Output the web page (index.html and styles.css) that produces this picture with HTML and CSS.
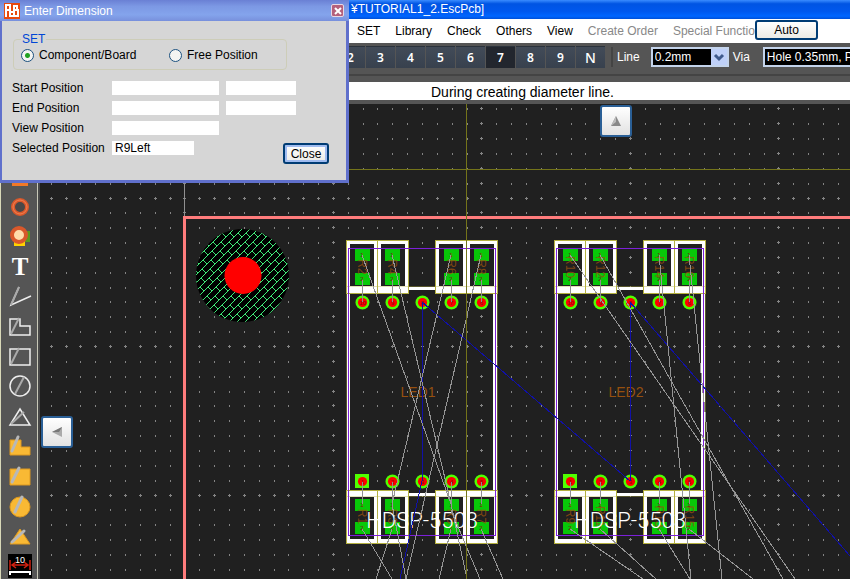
FILE: index.html
```html
<!DOCTYPE html>
<html lang="en">

<head>
    <meta charset="UTF-8">
    <meta name="viewport" content="width=device-width, initial-scale=1.0">
    <title>TUTORIAL1_2.EscPcb</title>
    <link rel="stylesheet" href="styles.css">
</head>

<body>
    <header class="titlebar">¥TUTORIAL1_2.EscPcb]</header>

    <div class="menubar">
        <nav class="menu">
            <a href="#">SET</a>
            <a href="#">Library</a>
            <a href="#">Check</a>
            <a href="#">Others</a>
            <a href="#">View</a>
            <a href="#" class="disabled">Create Order</a>
            <a href="#" class="disabled">Special Function</a>
        </nav>
        <button class="xp-button auto">Auto</button>
    </div>

    <div class="toolbar">
        <div class="layers">
            <button>2</button>
            <button>3</button>
            <button>4</button>
            <button>5</button>
            <button>6</button>
            <button class="active">7</button>
            <button>8</button>
            <button>9</button>
            <button class="letter">N</button>
        </div>
        <span class="divider"></span>
        <label for="line">Line</label>
        <span class="combo">
            <select id="line">
                <option>0.2mm</option>
            </select>
            <svg class="arrow" viewBox="0 0 16 16"><path d="M4 6l4 4 4-4" fill="none" stroke="#3f5a8c" stroke-width="3"/></svg>
        </span>
        <label for="via">Via</label>
        <span class="combo wide">
            <select id="via">
                <option>Hole 0.35mm, Pad 0.6mm</option>
            </select>
        </span>
    </div>

    <div class="status">During creating diameter line.</div>

    <main class="work">
        <aside class="tools">
            <button aria-label="Pad"><svg viewBox="0 0 30 30"><path d="M7 6h16v18H7z" fill="#f07828"/></svg></button>
            <button aria-label="Via"><svg viewBox="0 0 30 30"><circle cx="15" cy="15" r="7" fill="#484848" stroke="#d9582b" stroke-width="4"/><circle cx="15" cy="15" r="7" fill="none" stroke="#f08050"/></svg></button>
            <button aria-label="Component"><svg viewBox="0 0 30 30"><path d="M16 9h9v11h-9z" fill="#5a9a20"/><path d="M9 17h11v7H9z" fill="#ffd200"/><circle cx="14" cy="13" r="7" fill="#ffdcaa" stroke="#d9582b" stroke-width="4"/></svg></button>
            <button class="text-tool" aria-label="Text">T</button>
            <button aria-label="Line"><svg viewBox="0 0 30 30"><path d="M26 14L6 23L14 5" class="outline"/><path d="M14 5L6 23" class="pen"/></svg></button>
            <button aria-label="Outline polygon"><svg viewBox="0 0 30 30"><path d="M5 7h10v7h10v9H5z" class="outline"/><path d="M14 6L6 22" class="pen"/></svg></button>
            <button aria-label="Outline box"><svg viewBox="0 0 30 30"><path d="M5 7h20v16H5z" class="outline"/><path d="M14 6L6 22" class="pen"/></svg></button>
            <button aria-label="Outline circle"><svg viewBox="0 0 30 30"><circle cx="15" cy="14" r="10" class="outline"/><path d="M19 5L10 22" class="pen"/></svg></button>
            <button aria-label="Outline triangle"><svg viewBox="0 0 30 30"><path d="M15 7l10 16H5z" class="outline"/><path d="M19 10L6 22" class="pen"/></svg></button>
            <button aria-label="Filled polygon"><svg viewBox="0 0 30 30"><path d="M5 8h11v7h9v8H5z" class="solid"/><path d="M13 5L7 19" class="brush"/></svg></button>
            <button aria-label="Filled box"><svg viewBox="0 0 30 30"><path d="M5 7h20v16H5z" class="solid"/><path d="M14 6L7 20" class="brush"/></svg></button>
            <button aria-label="Filled circle"><svg viewBox="0 0 30 30"><circle cx="15" cy="15" r="10" class="solid"/><path d="M17 5L10 20" class="brush"/></svg></button>
            <button aria-label="Filled triangle"><svg viewBox="0 0 30 30"><path d="M15 7l10 15H5z" class="solid"/><path d="M19 9L7 20" class="brush"/></svg></button>
            <button aria-label="Dimension"><svg viewBox="0 0 30 30"><path d="M3 2h24v24H3z" fill="#000"/><text x="15" y="11" class="dim">10</text><path d="M5 8v10M25 8v10M7 13h16M11 10l-4 3 4 3M19 10l4 3-4 3" stroke="#d02010" fill="none" stroke-width="1.5"/><path d="M5 23v-3h20v3" stroke="#fff" fill="none" stroke-width="2"/></svg></button>
        </aside>

        <div class="canvas">
            <svg class="board" width="100%" height="100%">
                <defs>
                    <clipPath id="mark"><circle cx="242.5" cy="275.5" r="46.5"/></clipPath>
                </defs>
                <g id="board" transform="translate(-40 -104)"></g>
            </svg>
            <button class="scroll up" aria-label="Scroll up"><svg viewBox="0 0 12 12"><path d="M6 1l5 10H1z" fill="#888"/><path d="M6 1v6l-5 4z" fill="#bbb"/></svg></button>
            <button class="scroll left" aria-label="Scroll left"><svg viewBox="0 0 12 12"><path d="M1 6l10-5v10z" fill="#aaa"/><path d="M1 6l10-5-3 5z" fill="#777"/></svg></button>
        </div>
    </main>

    <form class="dialog">
        <div class="dialog-title">
            <svg class="logo" viewBox="0 0 16 16"><path d="M0 0h16v16H0z" fill="#e8480c"/><path d="M2 14V2h4v5H2M9 9H6v4h3M10 3h3v4h-3zM10 7h4v6h-4z" fill="none" stroke="#fff" stroke-width="2"/></svg>
            <span>Enter Dimension</span>
            <button type="button" class="close-x" aria-label="Close window"><svg viewBox="0 0 10 10"><path d="M2 2l6 6M8 2L2 8" stroke="#fff" stroke-width="2"/></svg></button>
        </div>
        <fieldset>
            <legend>SET</legend>
            <label class="first"><input type="radio" name="set" checked>Component/Board</label>
            <label><input type="radio" name="set">Free Position</label>
        </fieldset>
        <div class="fields">
            <label for="start">Start Position</label>
            <input type="text" id="start">
            <input type="text" aria-label="Start Position 2">
            <label for="end">End Position</label>
            <input type="text" id="end">
            <input type="text" aria-label="End Position 2">
            <label for="view">View Position</label>
            <input type="text" id="view">
            <label for="selected">Selected Position</label>
            <input type="text" id="selected" value="R9Left">
        </div>
        <button type="button" class="xp-button close">Close</button>
    </form>

    <script src="board.js"></script>
</body>

</html>
```
FILE: styles.css
```css
* {
    box-sizing: border-box;
}

body {
    margin: 0;
    height: 100vh;
    display: flex;
    flex-direction: column;
    overflow: hidden;
    background: #555;
    color: #000;
    font: 12px/16px "Liberation Sans", Arial, sans-serif;
}

button,
input,
select {
    font: inherit;
    color: inherit;
    margin: 0;
    padding: 0;
}

.titlebar {
    flex: none;
    height: 19px;
    padding-left: 351px;
    line-height: 18px;
    color: #fff;
    white-space: nowrap;
    background: linear-gradient(#3a8cff, #0054e3 20%, #0058ee 60%, #0066ff 85%, #0050d8);
}

.menubar {
    flex: none;
    display: flex;
    height: 24px;
    background: #fff;
}

.menu {
    flex: none;
    display: flex;
    align-items: center;
    gap: 15px;
    width: 755px;
    padding-left: 357px;
    overflow: hidden;
    white-space: nowrap;
}

.menu a {
    flex: none;
    color: #000;
    text-decoration: none;
}

.menu a.disabled {
    color: #888;
}

.xp-button {
    border: 2px solid #003c74;
    border-radius: 3px;
    background: linear-gradient(#fff, #ecebe5);
    line-height: 14px;
}

.auto {
    width: 63px;
    height: 20px;
    margin-top: 1px;
}

.toolbar {
    flex: none;
    display: flex;
    align-items: center;
    height: 33px;
    padding: 0 0 3px 336px;
    border-bottom: 2px solid #444;
    color: #fff;
    overflow: hidden;
}

.toolbar label {
    flex: none;
}

.layers {
    flex: none;
    display: flex;
    gap: 1px;
}

.layers button {
    width: 29px;
    height: 22px;
    border: 0;
    border-top: 1px solid #2c333c;
    background: linear-gradient(#424b58, #38414e);
    font: 600 12px/20px "Noto Sans", sans-serif;
    color: #fff;
}

.layers .active {
    background: #22262e;
}

.layers .letter {
    font-size: 14px;
    font-weight: 500;
}

.divider {
    flex: none;
    width: 2px;
    height: 20px;
    margin: 0 4px 0 6px;
    background: #444;
}

.combo {
    flex: none;
    position: relative;
    display: flex;
    width: 78px;
    height: 20px;
    margin: 0 4px 0 11px;
}

.combo.wide {
    width: 160px;
    margin-left: 13px;
}

.combo select {
    width: 100%;
    padding-left: 2px;
    appearance: none;
    border: 2px solid #c4d4ec;
    border-radius: 0;
    background: #000;
    color: #fff;
}

.arrow {
    position: absolute;
    top: 2px;
    right: 2px;
    width: 16px;
    height: 16px;
    background: #bfd0f8;
    pointer-events: none;
}

.status {
    flex: none;
    height: 18px;
    margin: 6px 0 4px;
    padding-left: 431px;
    background: #fff;
    font-size: 14px;
    line-height: 20px;
    white-space: nowrap;
}

.work {
    flex: 1;
    min-height: 0;
    display: flex;
}

.tools {
    flex: none;
    display: flex;
    flex-direction: column;
    width: 40px;
    padding: 58px 0 0 4px;
    overflow: hidden;
    border-left: 1px solid #d8d8b8;
    background: linear-gradient(90deg, #555 32px, #c8c8b8 32px, #c8c8b8 33px, #484848 33px) content-box, linear-gradient(#555, #555);
}

.tools button {
    flex: none;
    width: 30px;
    height: 30px;
    border: 0;
    background: none;
}

.tools svg {
    display: block;
    width: 30px;
    height: 30px;
}

.tools .text-tool {
    color: #fff;
    font: bold 25px/30px "Liberation Serif", serif;
}

.outline {
    fill: none;
    stroke: #eee;
    stroke-width: 1.5;
}

.pen {
    fill: none;
    stroke: #aaa;
    stroke-width: 2;
}

.solid {
    fill: #f9b934;
    stroke: #dc9820;
}

.brush {
    stroke: #b8b8b8;
    stroke-width: 3;
    stroke-linecap: round;
}

.dim {
    fill: #fff;
    font: 9px "Liberation Sans", sans-serif;
    text-anchor: middle;
}

.canvas {
    position: relative;
    flex: 1;
    min-width: 0;
    overflow: hidden;
    background: #202020;
}

.board {
    display: block;
}

.board text {
    fill: #96500f;
    font: 14px "Liberation Sans", sans-serif;
    text-anchor: middle;
}

.board .ref {
    font-size: 12px;
}

.board .part {
    fill: #fff;
    font: 300 22px Roboto, "Liberation Sans", sans-serif;
}

.board .pin {
    fill: #801010;
    font-size: 6px;
}

.scroll {
    position: absolute;
    display: flex;
    align-items: center;
    justify-content: center;
    width: 32px;
    height: 32px;
    border: 2px solid #2a5f96;
    border-radius: 3px;
    background: linear-gradient(#fff, #e2e2e2);
}

.scroll svg {
    width: 12px;
    height: 12px;
}

.scroll.up {
    top: 1px;
    left: 560px;
}

.scroll.left {
    top: 312px;
    left: 1px;
}

/* floating window */
.dialog {
    position: absolute;
    top: 0;
    left: 0;
    width: 349px;
    padding-bottom: 16px;
    border: solid #6070cc;
    border-width: 0 3px 3px 2px;
    background: #d6d6d6;
}

.dialog-title {
    display: flex;
    align-items: center;
    gap: 4px;
    height: 21px;
    margin: 0 -3px 0 -2px;
    padding: 0 5px 0 4px;
    background: linear-gradient(#6a80d4, #7c98e4 30%, #84a4ec 70%, #7890dc);
    color: #fff;
}

.logo {
    width: 16px;
    height: 16px;
}

.close-x {
    display: flex;
    align-items: center;
    justify-content: center;
    width: 13px;
    height: 13px;
    margin-left: auto;
    border: 1px solid #e8d8e4;
    border-radius: 2px;
    background: #b4607c;
}

.close-x svg {
    width: 10px;
    height: 10px;
    flex: none;
}

fieldset {
    display: flex;
    width: 274px;
    height: 38px;
    margin: 11px 0 0 11px;
    padding: 1px 0 0 7px;
    border: 1px solid #cdcdb8;
    border-radius: 4px;
}

legend {
    padding: 0 1px;
    color: #0046d5;
    line-height: 14px;
}

fieldset label {
    display: flex;
    align-items: center;
    gap: 5px;
    height: 16px;
}

fieldset .first {
    width: 148px;
}

input[type="radio"] {
    appearance: none;
    width: 13px;
    height: 13px;
    border: 1px solid #1c5180;
    border-radius: 50%;
    background: #f4f4f2;
}

input[type="radio"]:checked {
    background: radial-gradient(#21a121 2px, #f4f4f2 3px);
}

.fields {
    display: grid;
    grid-template-columns: 93px 107px 70px;
    column-gap: 7px;
    grid-auto-rows: 20px;
    align-items: center;
    margin: 8px 0 0 10px;
}

.fields input {
    width: 100%;
    height: 14px;
    padding: 0 3px;
    border: 0;
    background: #fff;
    line-height: 14px;
}

.fields label {
    grid-column: 1;
    white-space: nowrap;
}

#selected {
    width: 82px;
}

.close {
    display: block;
    width: 46px;
    height: 21px;
    margin: -15px 17px 0 auto;
    box-shadow: inset 0 0 0 2px #a0bcf0;
}
```
FILE: board.js
```js
const board = document.getElementById('board');

function draw(tag, attrs, text) {
    const el = document.createElementNS('http://www.w3.org/2000/svg', tag);
    for (const key in attrs) el.setAttribute(key, attrs[key]);
    if (text) el.textContent = text;
    board.appendChild(el);
    return el;
}

function box(x1, y1, x2, y2, fill) {
    draw('rect', { x: x1, y: y1, width: x2 - x1, height: y2 - y1, fill: fill, 'shape-rendering': 'crispEdges' });
}

function frame(x1, y1, x2, y2, stroke) {
    draw('path', { d: `M${x1} ${y1}H${x2}V${y2}H${x1}Z`, fill: 'none', stroke: stroke, 'shape-rendering': 'crispEdges' });
}

function line(x1, y1, x2, y2, stroke) {
    draw('path', { d: `M${x1} ${y1}L${x2} ${y2}`, fill: 'none', stroke: stroke, 'shape-rendering': 'crispEdges' });
}

// Grid: a dot every step, a cross on every tenth row and column
function drawGrid() {
    const step = 14.85;
    let dots = '';
    for (let i = -10; i < 140; i++) {
        for (let j = -8; j < 100; j++) {
            const x = Math.round(184.4 + i * step);
            const y = Math.round(198.5 + j * step);
            dots += `M${x} ${y - 1}h1v2h-1z`;
            if (i % 10 === 0 || j % 10 === 0) {
                dots += `M${x - 1} ${y - 1}h3v1h-3zM${x} ${y - 2}h1v3h-1z`;
            }
        }
    }
    draw('path', { d: dots, fill: '#848484', 'shape-rendering': 'crispEdges' });
}

// Fiducial mark, filled with a slanted brick hatch
function drawMark() {
    draw('circle', { cx: 242.5, cy: 275.5, r: 46.5, fill: '#000' });
    let d = '';
    for (let row = 0; row < 26; row++) {
        const x = 92 + row * 8;
        d += `M${x} 323l96 -96`;
        for (let k = 0; k < 11; k++) {
            const s = k * 9;
            d += `M${x + s} ${323 - s}l4 4`;
        }
    }
    draw('path', { d: d, stroke: '#40e878', fill: 'none', 'clip-path': 'url(#mark)', 'shape-rendering': 'crispEdges' });
    draw('circle', { cx: 243, cy: 275.5, r: 18.5, fill: '#f00' });
}

function resistor(x1, x2, top, cx, name, dx) {
    const upper = top < 400;
    const y1 = top, y2 = top + 53;
    box(x1 + dx, y1, x2 + dx, y2, '#fff');
    box(x1 + 3 + dx, y1 + (upper ? 4 : 7), x2 - 3 + dx, y2 - (upper ? 7 : 4), '#202020');
    frame(x1 - 0.5 + dx, y1 + 0.5, x2 + 0.5 + dx, y2 + 0.5, '#b4b040');
    const p = upper ? [249, 273] : [499, 522];
    for (const y of p) box(cx - 7 + dx, y, cx + 8 + dx, y + 12, '#08c808');
    const my = (p[0] + p[1]) / 2 + 6;
    draw('text', { x: cx + dx, y: my + 4, transform: `rotate(90 ${cx + dx} ${my})`, opacity: 0.8, class: 'ref' }, name);
    p.forEach((y, k) => draw('text', { x: cx + dx, y: y + 8, class: 'pin' }, String(k + 1)));
}

function drawModule(dx, label, names) {
    const cols = [362, 392, 451, 481];
    const spans = [[347, 377], [378, 408], [436, 466], [467, 497]];

    box(347 + dx, 287, 350 + dx, 497, '#fff');
    box(493 + dx, 287, 497 + dx, 497, '#fff');
    box(350 + dx, 287, 493 + dx, 290, '#fff');
    box(350 + dx, 493, 493 + dx, 496, '#fff');

    spans.forEach((s, k) => {
        resistor(s[0], s[1], 240, cols[k], names[k], dx);
        resistor(s[0], s[1], 490, cols[k], names[k + 4], dx);
    });
    frame(346.5 + dx, 286.5, 497.5 + dx, 496.5, '#b4b04060');
    frame(348.5 + dx, 248.5, 495.5 + dx, 535.5, '#7c20d8');

    [362.5, 392.5, 422.5, 451.5, 481.5].forEach((x, k) => {
        draw('circle', { cx: x + dx, cy: 302.5, r: 7, fill: '#50ff00' });
        draw('circle', { cx: x + dx, cy: 302.5, r: 4.6, fill: '#f00' });
        draw('text', { x: x + dx, y: 304.5, class: 'pin' }, ['10', '9', '8', '7', '6'][k]);
        if (k === 0) box(x - 7.5 + dx, 474, x + 6.5 + dx, 488, '#50ff00');
        else draw('circle', { cx: x + dx, cy: 481.5, r: 7, fill: '#50ff00' });
        draw('circle', { cx: x + dx, cy: 481.5, r: 4.6, fill: '#f00' });
        draw('text', { x: x + dx, y: 483.5, class: 'pin' }, String(k + 1));
    });
    draw('text', { x: 418 + dx, y: 397 }, label);
    draw('text', { x: 422 + dx, y: 528, class: 'part' }, 'HDSP-5503');
    for (const x of cols) {
        line(x + 0.5 + dx, 280, x + 0.5 + dx, 302, '#909090');
        line(x + 0.5 + dx, 482, x + 0.5 + dx, 504, '#909090');
    }
}

// Unrouted connections
const rats = [
    [362, 255, 451, 504], [392, 255, 451, 504], [451, 255, 392, 504], [481, 255, 406, 579],
    [362, 529, 392, 579], [392, 529, 376, 579], [392, 504, 406, 579], [451, 529, 439, 579],
    [451, 504, 467, 579], [451, 510, 480, 579], [481, 529, 503, 579],
    [570, 255, 795, 579], [600, 255, 783, 579], [659, 255, 691, 579], [689, 255, 722, 579],
    [570, 529, 643, 579], [600, 529, 656, 579], [659, 529, 690, 579], [689, 529, 753, 579]
];
const power = [
    [422.5, 302, 422.5, 481], [422, 481, 400, 579], [422, 302, 630, 481],
    [630.5, 302, 630.5, 481], [630, 302, 850, 556]
];

drawGrid();
line(184.5, 104, 184.5, 217, '#909090');
drawMark();
box(183, 216, 4000, 219, '#ff7c7c');
box(183, 216, 186, 4000, '#ff7c7c');
drawModule(0, 'LED1', ['R2', 'R4', 'R6', 'R8', 'R1', 'R3', 'R5', 'R7']);
drawModule(208, 'LED2', ['R10', 'R12', 'R14', 'R16', 'R9', 'R11', 'R13', 'R15']);
power.forEach(p => line(...p, '#1010a8'));
rats.forEach(r => line(...r, '#969696'));
line(466.5, 104, 466.5, 4000, '#74741a');
line(40, 169.5, 4000, 169.5, '#74741a');
```
